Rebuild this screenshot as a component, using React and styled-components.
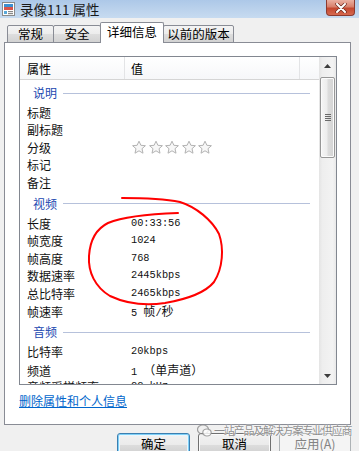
import React from 'react';
import styled, { createGlobalStyle } from 'styled-components';

const GlobalStyle = createGlobalStyle`
  html, body { margin: 0; padding: 0; background: #f0f0f0; }
  body { font-family: "Noto Sans CJK SC", "Noto Sans", sans-serif; }
  * { box-sizing: border-box; }
`;

const Window = styled.div`
  position: relative;
  width: 359px;
  height: 451px;
  overflow: hidden;
  background: #f0f0f0;
  display: flex;
  flex-direction: column;
  font-family: "Noto Sans CJK SC", "Noto Sans", sans-serif;
  color: #000;
`;

const TitleBar = styled.div`
  height: 18px;
  flex: none;
  display: flex;
  align-items: center;
  padding-left: 2px;
  background: linear-gradient(#adc8e8, #c7dbf0);
`;

const Title = styled.div`
  margin-left: 5px;
  font-size: 13.5px;
  line-height: 18px;
  color: #1a1a1a;
`;

const CloseButton = styled.div`
  margin-left: auto;
  margin-right: 4px;
  align-self: flex-start;
  width: 29px;
  height: 16px;
  border: 1px solid #8d3a2f;
  border-top: none;
  border-radius: 0 0 4px 4px;
  background: linear-gradient(#eab0a2, #d9806c 45%, #c4472f 55%, #d66a50);
  display: flex;
  align-items: center;
  justify-content: center;
`;

const Body = styled.div`
  flex: 1;
  display: flex;
  flex-direction: column;
  padding: 0 8px 0 4px;
`;

const TabStrip = styled.div`
  display: flex;
  align-items: flex-end;
  height: 25px;
  margin-bottom: -1px;
  padding-left: 3px;
  position: relative;
  z-index: 1;
`;

const Tab = styled.div`
  width: ${(p) => p.$w}px;
  height: ${(p) => (p.$active ? 21 : 18)}px;
  margin-left: ${(p) => (p.$first ? 0 : -1)}px;
  border: 1px solid #898c95;
  border-bottom: ${(p) => (p.$active ? 'none' : '1px solid #898c95')};
  border-radius: 2px 2px 0 0;
  background: ${(p) =>
    p.$active ? '#ffffff' : 'linear-gradient(#f4f4f4, #ececec 50%, #dedede 50%, #d2d2d2)'};
  font-size: 12.5px;
  line-height: 1;
  display: flex;
  align-items: center;
  justify-content: center;
  padding-bottom: ${(p) => (p.$active ? 2 : 0)}px;
  position: relative;
  z-index: ${(p) => (p.$active ? 2 : 1)};
  color: #000;
`;

const Panel = styled.div`
  width: 347px;
  height: 383px;
  border: 1px solid #898c95;
  background: #ffffff;
  padding: 13px 0 0 14px;
  display: flex;
  flex-direction: column;
`;

const ListBox = styled.div`
  width: 318px;
  height: 329px;
  border: 1px solid #828790;
  display: flex;
  overflow: hidden;
  background: #fff;
`;

const ListMain = styled.div`
  flex: 1;
  min-width: 0;
  overflow: hidden;
  display: flex;
  flex-direction: column;
`;

const Header = styled.div`
  flex: none;
  display: grid;
  grid-template-columns: 105px 175px 1fr;
  height: 23px;
  border-bottom: 1px solid #d5d5d5;
  background: linear-gradient(#ffffff, #f6f7f9);
`;

const HeaderCell = styled.div`
  padding-left: ${(p) => p.$pad}px;
  border-right: ${(p) => (p.$last ? 'none' : '1px solid #e3e4e6')};
  display: flex;
  align-items: center;
  font-size: 12px;
`;

const GroupRow = styled.div`
  flex: none;
  height: 24px;
  padding: 2px 9px 0 13px;
  display: flex;
  align-items: center;
`;

const GroupTitle = styled.span`
  color: #2148b0;
  font-size: 12px;
  line-height: 1;
`;

const GroupLine = styled.div`
  flex: 1;
  height: 1px;
  margin-left: 6px;
  background: #b6c1db;
`;

const Row = styled.div`
  flex: none;
  height: 17.4px;
  display: grid;
  grid-template-columns: 104px 1fr;
  padding-left: 7px;
  align-items: center;
  font-size: 12px;
  line-height: 17.4px;
  white-space: pre;
`;

const Label = styled.span`
  color: #111;
`;

const Value = styled.span`
  font-family: "Liberation Mono", "DejaVu Sans Mono", monospace;
  font-size: 10.3px;
  color: #111;
  white-space: pre;
`;

const CjkPart = styled.span`
  font-family: "Noto Sans CJK SC", sans-serif;
  font-size: 12px;
`;

const Stars = styled.div`
  display: flex;
  gap: 0.5px;
  align-items: center;
`;

const ScrollBar = styled.div`
  width: 17px;
  flex: none;
  display: flex;
  flex-direction: column;
  background: linear-gradient(to right, #e4e4e4, #eeeeee 20%, #f3f3f3 80%, #e9e9e9);
`;

const ScrollArrow = styled.div`
  height: 17px;
  flex: none;
  display: flex;
  align-items: center;
  justify-content: center;
`;

const Thumb = styled.div`
  margin: 3px 1px 0;
  height: 81px;
  flex: none;
  border: 1px solid #979797;
  border-radius: 2px;
  background: linear-gradient(to right, #f6f6f6, #ededed 45%, #dcdcdc 55%, #d4d4d4);
  box-shadow: inset 0 0 0 1px #fbfbfb;
  display: flex;
  align-items: center;
  justify-content: center;
`;

const Spacer = styled.div`
  flex: 1;
`;

const DeleteLink = styled.a`
  margin-top: 8px;
  align-self: flex-start;
  font-size: 12px;
  line-height: 16px;
  color: #0066cc;
  text-decoration: underline;
  cursor: pointer;
`;

const ButtonRow = styled.div`
  display: flex;
  gap: 8px;
  margin-top: 8px;
  padding-left: 113px;
`;

const Button = styled.div`
  width: ${(p) => p.$w}px;
  height: 23px;
  flex: none;
  border-radius: 3px;
  font-size: 12.5px;
  display: flex;
  align-items: center;
  justify-content: center;
  padding-bottom: 2px;
  border: 1px solid
    ${(p) => (p.$kind === 'default' ? '#3c7fb1' : p.$kind === 'disabled' ? '#adb2b5' : '#707070')};
  background: ${(p) =>
    p.$kind === 'disabled'
      ? '#f4f4f4'
      : 'linear-gradient(#f2f2f2, #ebebeb 50%, #dddddd 50%, #cfcfcf)'};
  box-shadow: ${(p) =>
    p.$kind === 'default'
      ? 'inset 0 0 0 1px #7fd0f7, inset 0 0 0 2px #eaf6fd'
      : p.$kind === 'disabled'
      ? 'none'
      : 'inset 0 0 0 1px #fbfbfb'};
  color: ${(p) => (p.$kind === 'disabled' ? '#838383' : '#000')};
`;

const Annotation = styled.svg`
  position: absolute;
  left: 0;
  top: 0;
  pointer-events: none;
`;

const Watermark = styled.div`
  position: absolute;
  left: 197px;
  top: 423px;
  display: flex;
  align-items: center;
  gap: 2px;
  pointer-events: none;
`;

const WatermarkText = styled.span`
  font-size: 11px;
  letter-spacing: -1.2px;
  line-height: 14px;
  color: rgba(120, 120, 120, 0.85);
  text-shadow: 0 0 2px #fff, 0 0 1px #fff;
`;

const StarIcon = () => (
  <svg width="16" height="15" viewBox="0 0 16 15">
    <path
      d="M8 1.2 L9.9 5.3 L14.4 5.7 L11 8.7 L12 13.2 L8 10.8 L4 13.2 L5 8.7 L1.6 5.7 L6.1 5.3 Z"
      fill="#f7f7f7"
      stroke="#b3b3b3"
      strokeWidth="1"
      strokeLinejoin="round"
    />
  </svg>
);

const CJK_RE = /([\u3000-\u9fff\uff00-\uffef]+)/;

const splitCjk = (s) =>
  s
    .split(CJK_RE)
    .filter(Boolean)
    .map((part, i) =>
      CJK_RE.test(part) ? <CjkPart key={i}>{part}</CjkPart> : <span key={i}>{part}</span>
    );

const sections = [
  {
    title: '说明',
    items: [
      { label: '标题' },
      { label: '副标题' },
      { label: '分级', stars: true },
      { label: '标记' },
      { label: '备注' },
    ],
  },
  {
    title: '视频',
    items: [
      { label: '长度', value: '00:33:56' },
      { label: '帧宽度', value: '1024' },
      { label: '帧高度', value: '768' },
      { label: '数据速率', value: '2445kbps' },
      { label: '总比特率', value: '2465kbps' },
      { label: '帧速率', value: '5 帧/秒' },
    ],
  },
  {
    title: '音频',
    items: [
      { label: '比特率', value: '20kbps' },
      { label: '频道', value: '1 （单声道）' },
      { label: '音频采样频率', value: '22 kHz' },
    ],
  },
];

const tabs = [
  { label: '常规', w: 47 },
  { label: '安全', w: 48 },
  { label: '详细信息', w: 64, active: true },
  { label: '以前的版本', w: 71 },
];

export default function App() {
  return (
    <>
      <GlobalStyle />
      <Window>
        <TitleBar>
          <svg width="13" height="14" viewBox="0 0 13 14">
            <rect x="0.5" y="0.5" width="12" height="13" fill="#fff" stroke="#8a8a8a" />
            <rect x="2" y="2" width="9" height="3" fill="#3c8fd0" />
            <rect x="2" y="5" width="9" height="3" fill="#d9534a" />
            <rect x="2" y="9" width="3" height="3" fill="#58a8d8" />
            <rect x="6" y="9" width="5" height="1.2" fill="#888" />
            <rect x="6" y="11" width="5" height="1.2" fill="#888" />
          </svg>
          <Title>录像111 属性</Title>
          <CloseButton>
            <svg width="12" height="10" viewBox="0 0 12 10">
              <path d="M2 1 L10 9 M10 1 L2 9" stroke="#6b2a20" strokeWidth="3.4" strokeLinecap="round" />
              <path d="M2 1 L10 9 M10 1 L2 9" stroke="#ffffff" strokeWidth="2" strokeLinecap="round" />
            </svg>
          </CloseButton>
        </TitleBar>
        <Body>
          <TabStrip>
            {tabs.map((t, i) => (
              <Tab key={t.label} $w={t.w} $active={t.active} $first={i === 0}>
                {t.label}
              </Tab>
            ))}
          </TabStrip>
          <Panel>
            <ListBox>
              <ListMain>
                <Header>
                  <HeaderCell $pad={7}>属性</HeaderCell>
                  <HeaderCell $pad={6}>值</HeaderCell>
                  <HeaderCell $last />
                </Header>
                {sections.map((sec) => (
                  <React.Fragment key={sec.title}>
                    <GroupRow>
                      <GroupTitle>{sec.title}</GroupTitle>
                      <GroupLine />
                    </GroupRow>
                    {sec.items.map((it) => (
                      <Row key={it.label}>
                        <Label>{it.label}</Label>
                        {it.stars ? (
                          <Stars>
                            {[0, 1, 2, 3, 4].map((n) => (
                              <StarIcon key={n} />
                            ))}
                          </Stars>
                        ) : (
                          <Value>{it.value ? splitCjk(it.value) : null}</Value>
                        )}
                      </Row>
                    ))}
                  </React.Fragment>
                ))}
              </ListMain>
              <ScrollBar>
                <ScrollArrow>
                  <svg width="7" height="4" viewBox="0 0 7 4">
                    <path d="M0 4 L3.5 0 L7 4 Z" fill="#3d3d3d" />
                  </svg>
                </ScrollArrow>
                <Thumb>
                  <svg width="6" height="8" viewBox="0 0 6 8">
                    <path d="M0 0.5 H6 M0 2.5 H6 M0 4.5 H6 M0 6.5 H6" stroke="#6a6a6a" strokeWidth="1" />
                  </svg>
                </Thumb>
                <Spacer />
                <ScrollArrow>
                  <svg width="7" height="4" viewBox="0 0 7 4">
                    <path d="M0 0 L3.5 4 L7 0 Z" fill="#3d3d3d" />
                  </svg>
                </ScrollArrow>
              </ScrollBar>
            </ListBox>
            <DeleteLink>删除属性和个人信息</DeleteLink>
          </Panel>
          <ButtonRow>
            <Button $w={73} $kind="default">确定</Button>
            <Button $w={73} $kind="normal">取消</Button>
            <Button $w={72} $kind="disabled">应用(A)</Button>
          </ButtonRow>
        </Body>

        <Annotation width="359" height="451" viewBox="0 0 359 451">
          <path
            d="M122 198 C140 198, 165 199, 180 202 C196 207, 212 220, 219 234 C224 248, 223 268, 214 282 C205 293, 188 299, 165 303 C145 306, 125 303, 110 296 C95 287, 88 272, 89 256 C90 240, 96 229, 108 223 C125 216, 150 214, 178 213"
            fill="none"
            stroke="#ff0000"
            strokeWidth="2"
            strokeLinecap="round"
            strokeLinejoin="round"
          />
        </Annotation>

        <Watermark>
          <svg width="15" height="13" viewBox="0 0 15 13">
            <ellipse cx="6" cy="5.5" rx="5.5" ry="4.5" fill="none" stroke="rgba(140,140,140,0.8)" strokeWidth="1.2" />
            <ellipse cx="10" cy="8.5" rx="4.2" ry="3.5" fill="rgba(255,255,255,0.8)" stroke="rgba(140,140,140,0.8)" strokeWidth="1.2" />
          </svg>
          <WatermarkText>一站产品及解决方案专业供应商</WatermarkText>
        </Watermark>
      </Window>
    </>
  );
}
